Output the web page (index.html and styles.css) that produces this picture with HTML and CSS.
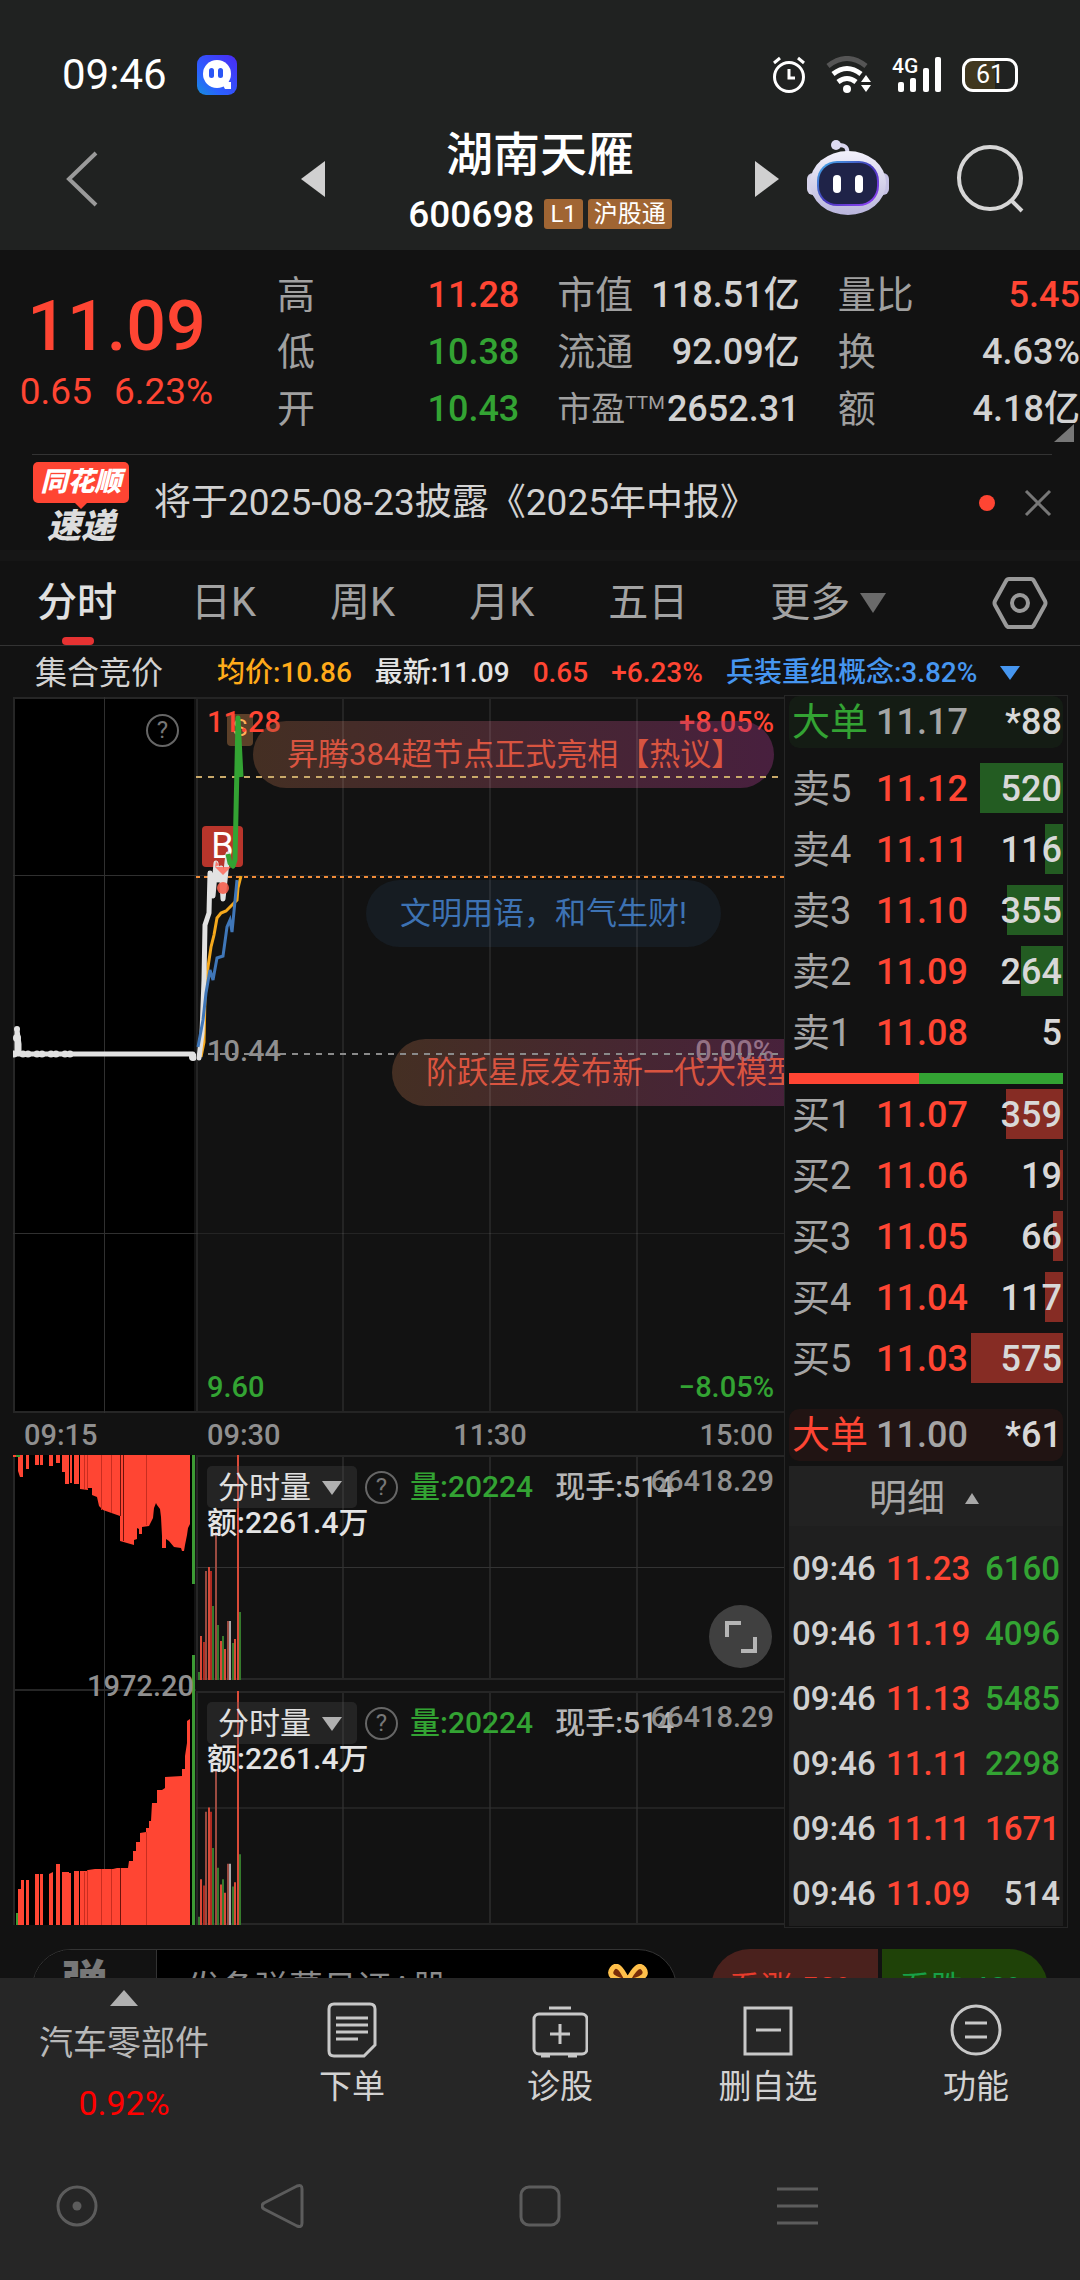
FILE: index.html
```html
<!DOCTYPE html>
<html lang="zh-CN">
    <head>
        <meta charset="utf-8">
        <meta name="viewport" content="width=device-width">
        <title>湖南天雁 600698</title>
        <link rel="stylesheet" href="styles.css">
    </head>
    <body>
        <header class="top">
            <div class="status">
                <span class="clock">09:46</span>
                <svg width="40" height="40" viewBox="0 0 40 40">
                    <defs>
                        <linearGradient id="app_bg" x1="0" y1="1" x2="1" y2="0">
                            <stop offset="0" stop-color="#1590d8" />
                            <stop offset="0.3" stop-color="#2a62ff" />
                            <stop offset="1" stop-color="#4a2af5" />
                        </linearGradient>
                    </defs>
                    <rect width="40" height="40" rx="9" fill="url(#app_bg)" />
                    <circle cx="20" cy="19" r="14" fill="#fff" />
                    <path d="M24 27h10v7h-6z" fill="#fff" />
                    <rect x="12" y="13" width="5" height="10" rx="2.5" fill="#2a55f5" />
                    <rect x="21" y="13" width="5" height="10" rx="2.5" fill="#2a55f5" />
                </svg>
                <div class="status_icons">
                    <svg width="34" height="38" viewBox="0 0 34 38" fill="none" stroke="#fff" stroke-width="3">
                        <circle cx="17" cy="21" r="14.5" />
                        <path d="M17 13v9h6M2 7l6-5M32 7l-6-5" />
                    </svg>
                    <svg width="46" height="38" viewBox="0 0 46 38" fill="none" stroke="#fff" stroke-width="5">
                        <path d="M2 10q19-15 38 0" stroke="#555" />
                        <path d="M7 18q14-11 28 0M12 26q9-7 18 0" />
                        <circle cx="21" cy="33" r="4" fill="#fff" stroke="none" />
                        <path d="M35 26l5-7 5 7zM35 29l5 7 5-7z" fill="#fff" stroke="none" />
                    </svg>
                    <div class="signal">
                        <span class="net">4G</span>
                        <svg width="50" height="38" viewBox="0 0 50 38" fill="#fff">
                            <rect x="6" y="26" width="6" height="10" rx="2" />
                            <rect x="18" y="22" width="6" height="14" rx="2" />
                            <rect x="31" y="12" width="6" height="24" rx="2" />
                            <rect x="43" y="1" width="6" height="35" rx="2" />
                        </svg>
                    </div>
                    <span class="battery">61</span>
                </div>
            </div>
            <div class="title_bar">
                <button class="plain" aria-label="返回">
                    <svg width="34" height="58" viewBox="0 0 34 58" fill="none" stroke="#9a9a9a" stroke-width="4">
                        <path d="M31 3L4 29l27 26" />
                    </svg>
                </button>
                <button class="plain prev" aria-label="上一只">
                    <svg width="24" height="36" viewBox="0 0 24 36"><path d="M24 0v36L0 18z" fill="#d0d0d0" /></svg>
                </button>
                <div class="stock">
                    <h1>湖南天雁</h1>
                    <div class="code">600698 <span class="tag">L1</span><span class="tag">沪股通</span></div>
                </div>
                <button class="plain" aria-label="下一只">
                    <svg width="24" height="36" viewBox="0 0 24 36"><path d="M0 0v36l24-18z" fill="#d0d0d0" /></svg>
                </button>
                <button class="plain robot" aria-label="助手">
                    <svg width="82" height="78" viewBox="0 0 82 78">
                        <defs>
                            <linearGradient id="head" x1="0" y1="0" x2="0" y2="1">
                                <stop offset="0" stop-color="#f2f1fb" />
                                <stop offset="1" stop-color="#b9b5dc" />
                            </linearGradient>
                            <linearGradient id="visor" x1="0" y1="0" x2="1" y2="1">
                                <stop offset="0" stop-color="#45b6ee" />
                                <stop offset="0.5" stop-color="#4338b8" />
                                <stop offset="1" stop-color="#9a44ff" />
                            </linearGradient>
                        </defs>
                        <path d="M40 14q2-9-8-9" fill="none" stroke="#d8d5ee" stroke-width="4" />
                        <circle cx="29" cy="5" r="5" fill="#dedbf2" />
                        <rect x="0" y="33" width="12" height="22" rx="6" fill="#d5d2ea" />
                        <rect x="70" y="33" width="12" height="22" rx="6" fill="#c5c1e4" />
                        <ellipse cx="41" cy="43" rx="38" ry="32" fill="url(#head)" />
                        <rect x="10" y="21" width="62" height="45" rx="20" fill="url(#visor)" />
                        <rect x="12" y="23" width="58" height="41" rx="18" fill="#1f2348" />
                        <rect x="26" y="35" width="8" height="18" rx="4" fill="#fff" />
                        <rect x="48" y="35" width="8" height="18" rx="4" fill="#fff" />
                    </svg>
                </button>
                <button class="plain search" aria-label="搜索">
                    <svg width="70" height="70" viewBox="0 0 70 70" fill="none" stroke="#d6d6d6" stroke-width="4">
                        <circle cx="34" cy="34" r="31" />
                        <path d="M55 56l11 11" />
                    </svg>
                </button>
            </div>
        </header>

        <main>
            <section class="quote">
                <div class="last">
                    <div class="price">11.09</div>
                    <div class="change"><span>0.65</span><span>6.23%</span></div>
                </div>
                <dl class="stats">
                    <div><dt>高</dt><dd class="red">11.28</dd></div>
                    <div><dt>市值</dt><dd>118.51亿</dd></div>
                    <div><dt>量比</dt><dd class="red">5.45</dd></div>
                    <div><dt>低</dt><dd class="green">10.38</dd></div>
                    <div><dt>流通</dt><dd>92.09亿</dd></div>
                    <div><dt>换</dt><dd>4.63%</dd></div>
                    <div><dt>开</dt><dd class="green">10.43</dd></div>
                    <div><dt class="pe">市盈<sup>TTM</sup></dt><dd>2652.31</dd></div>
                    <div><dt>额</dt><dd>4.18亿</dd></div>
                </dl>
                <svg class="corner" width="20" height="18" viewBox="0 0 20 18"><path d="M20 0v18H0z" fill="#777" /></svg>
            </section>

            <section class="news">
                <div class="news_logo">
                    <span class="logo_top">同花顺</span>
                    <span class="logo_bottom">速递</span>
                </div>
                <a href="#">将于2025-08-23披露《2025年中报》</a>
                <i class="dot"></i>
                <button class="plain" aria-label="关闭">
                    <svg width="28" height="28" viewBox="0 0 28 28" stroke="#777" stroke-width="3"><path d="M2 2l24 24M26 2L2 26" /></svg>
                </button>
            </section>

            <nav class="tabs">
                <button class="active">分时</button>
                <button>日K</button>
                <button>周K</button>
                <button>月K</button>
                <button>五日</button>
                <button class="more">更多<svg width="26" height="20" viewBox="0 0 26 20"><path d="M0 0h26L13 20z" fill="#6a6a6a" /></svg></button>
                <button class="settings" aria-label="设置">
                    <svg width="56" height="52" viewBox="0 0 56 52" fill="none" stroke="#999" stroke-width="4">
                        <path d="M17 2h22q2 0 3 2l11 20q1 2 0 4L42 48q-1 2-3 2H17q-2 0-3-2L3 28q-1-2 0-4L14 4q1-2 3-2z" />
                        <circle cx="28" cy="26" r="8" />
                    </svg>
                </button>
            </nav>

            <div class="info">
                <span class="auction">集合竞价</span>
                <span class="orange">均价:10.86</span>
                <span class="light">最新:11.09</span>
                <span class="red">0.65</span>
                <span class="red">+6.23%</span>
                <span class="blue">兵装重组概念:3.82%</span>
                <svg width="20" height="14" viewBox="0 0 20 14"><path d="M0 0h20L10 14z" fill="#4696f0" /></svg>
            </div>

            <section class="board">
                <div class="charts">
                    <!-- call auction price -->
                    <div class="panel auction_price">
                        <svg class="plot" viewBox="0 0 183 716" preserveAspectRatio="none">
                            <rect x="2" y="1" width="179" height="714" />
                            <g stroke="#262626" stroke-width="2">
                                <path d="M1 0v716M0 1h183M0 715h183" />
                                <path d="M0 178.500h183M91.500 0v716M0 536.500h183" stroke="#303030" stroke-width="1" />
                            </g>
                            <path d="M0 357h8M4 357v-24l2 14v10h174l1 4" fill="none" stroke="#e2e2e2" stroke-width="5" stroke-linejoin="round" />
                            <path d="M1 357h60" stroke="#e2e2e2" stroke-width="7" stroke-linecap="round" stroke-dasharray="0 9 0 5" />
                            <circle cx="4" cy="332" r="3" fill="#e2e2e2" />
                            <circle cx="4" cy="341" r="4" fill="#e2e2e2" />
                            <circle cx="180" cy="360" r="4" fill="#e2e2e2" />
                        </svg>
                        <button class="help auction_help" aria-label="说明">?</button>
                    </div>

                    <!-- intraday price -->
                    <div class="panel price_panel">
                        <span class="mark_b">B</span>
                        <span class="mark_s">S</span>
                        <span class="lbl top_left red">11.28</span>
                        <span class="lbl top_right red">+8.05%</span>
                        <span class="lbl mid_left gray">10.44</span>
                        <span class="lbl mid_right gray">0.00%</span>
                        <span class="lbl low_left green">9.60</span>
                        <span class="lbl low_right green">−8.05%</span>
                        <a class="pill pill_1" href="#">昇腾384超节点正式亮相【热议】</a>
                        <span class="pill pill_2">文明用语，和气生财!</span>
                        <a class="pill pill_3" href="#">阶跃星辰发布新一代大模型</a>
                        <svg class="plot" viewBox="0 0 588 716" preserveAspectRatio="none" fill="none">
                            <g stroke="#fff" stroke-opacity="0.08" stroke-width="2">
                                <path d="M1 0v716M147 0v716M294 0v716M441 0v716M0 1h588M0 715h588" />
                                <path d="M0 178.500h588M0 536.500h588" stroke-width="1" />
                            </g>
                            <path d="M0 80h582" stroke="#c9a96a" stroke-width="2" stroke-dasharray="6 6" />
                            <path d="M0 180h588" stroke="#f08c3a" stroke-width="2" stroke-dasharray="4 4" />
                            <path d="M12 357h570" stroke="#8a8a8a" stroke-width="2" stroke-dasharray="6 6" />
                            <path d="M5 360l3-15 1-45 3-30 3-20 3-12 3-17 4-5 5-2 5-5 6-6 1-12 3-12" stroke="#f5a81c" stroke-width="3" />
                            <path d="M3 361l3-25 2-53 1-55 4-12 1-40 3 23 3-33 2 17 3-12 2 31 4-37 1-8" stroke="#e2e2e2" stroke-width="5" stroke-linejoin="round" stroke-linecap="round" />
                            <path d="M2 350l5-27 3-27 4-23 3 10 4-22 6-2 4-29 3-7 2 12 5-52" stroke="#3f76b8" stroke-width="3" />
                            <path d="M19 170l8 8 8-8zM19 170l1-6 3 4z" fill="#ff6a5a" fill-opacity="0.85" />
                            <circle cx="27" cy="191" r="6" fill="#f5604f" fill-opacity="0.9" />
                            <path d="M32 157l2 9 3 3 2-6 3-142 3 59" stroke="#33a333" stroke-width="5" stroke-linejoin="round" />
                        </svg>
                    </div>

                    <div class="axis"><span>09:15</span></div>
                    <div class="axis day"><span>09:30</span><span>11:30</span><span>15:00</span></div>

                    <!-- call auction volume -->
                    <div class="panel auction_vol">
                        <svg class="plot" viewBox="0 0 183 470" preserveAspectRatio="none">
                            <rect x="2" width="179" height="470" />
                            <path d="M1 0v470M0 235h183" stroke="#262626" stroke-width="2" />
                            <path d="M91.500 0v470" stroke="#303030" />
                            <g fill="#ff4533">
                                <path d="M0 0h5v2H0zM5 0h5v22H7l-2-6zM13 0h3v14h-3zM22 0h4v10h-4zM27 0h3v10h-3zM36 0h4v11h-4zM43 0h4v8h-4zM49 0h7v29h-4V17h-3zM57 0h2v28h-2zM61 0h5v29h-5z" />
                                <path d="M67 0v34l8 1v-2h4v7l5 2 2 9 4 4 17 6v25l14 4v-5l3-1v-11l2 1v5h3v-7l7-1 2-4 2-4 1-10 2-5 1 2 3 4 1 8 1 19v12h4v-9l3 2 5 6 7 1 1 3h2l1-6 2-10 1-7 2-4V0z" />
                                <path d="M5 434h3v-9h3v45H5zM13 425h3v45h-3zM22 419h4v51h-4zM27 419h3v51h-3zM36 419l4-2v53h-4zM43 409h4v61h-4zM49 417h7v53h-7zM56 418h2v52h-2zM61 416h5v54h-5z" />
                                <path d="M67 470v-54h7l1-1 7-1h18l4-1h11l1-7h4v-10h3v-9h4v-9l6-1v-4h3v-7h2l1-18h5v-13h5l3-2v-11l17-1v-7h3v-13l2-13v-22l3-2v207z" />
                            </g>
                            <path d="M71.500 0v34M74.500 0v34M88.500 0v55M98.500 0v58M133.500 0v70M71.500 417v53M74.500 415v55M88.500 414v56M98.500 414v56M133.500 377v93" stroke="#c92d20" />
                            <path d="M107.500 0v61M110.500 0v86M107.500 413v57" stroke="#6d120b" />
                            <path d="M3 0h4v2H3zM3 458h2v12H3zM179 0h3v129h-3zM179 200h3v270h-3z" fill="#3c9a34" />
                        </svg>
                        <span class="lbl vol_max gray">1972.20</span>
                    </div>

                    <!-- intraday volume -->
                    <div class="vols">
                        <div class="panel vol">
                            <svg class="plot" viewBox="0 0 588 225" preserveAspectRatio="none">
                                <g id="vol_bars" fill="none" stroke-width="2">
                                    <path d="M1 0v225M147 0v225M294 0v225M441 0v225M0 1h588M0 224h588" stroke="#262626" />
                                    <path d="M0 112.500h588" stroke="#333" stroke-width="1" />
                                    <path d="M5 225v-44M13 225V112M25 225v-39M29 225v-31M39 225v-41M42 225V0" stroke="#d94a38" />
                                    <path d="M8 225v-38M15 225V116" stroke="#b02a20" />
                                    <path d="M10 225V116M20 225V77M32 225v-59" stroke="#9a4a40" />
                                    <path d="M3 225v-8M17 225v-74M22 225v-55M27 225v-44M37 225v-37M44 225v-68" stroke="#357a2c" />
                                    <path d="M34 225v-59" stroke="#aaa" />
                                </g>
                            </svg>
                            <div class="vol_head">
                                <select aria-label="指标"><option>分时量</option></select>
                                <button class="help" aria-label="说明">?</button>
                                <span class="green">量:20224</span>
                                <span class="hand">现手:514</span>
                            </div>
                            <div class="amount">额:2261.4万</div>
                            <span class="lbl vol_top gray">66418.29</span>
                            <button class="expand" aria-label="全屏">
                                <svg width="34" height="34" viewBox="0 0 34 34" fill="none" stroke="#b5b5b5" stroke-width="4"><path d="M3 17V3h14M17 31h14V17" /></svg>
                            </button>
                        </div>
                        <div class="panel vol vol_2">
                            <svg class="plot" viewBox="0 0 588 225" preserveAspectRatio="none"><use href="#vol_bars" /></svg>
                            <div class="vol_head">
                                <select aria-label="指标"><option>分时量</option></select>
                                <button class="help" aria-label="说明">?</button>
                                <span class="green">量:20224</span>
                                <span class="hand">现手:514</span>
                            </div>
                            <div class="amount">额:2261.4万</div>
                            <span class="lbl vol_top gray">66418.29</span>
                        </div>
                    </div>
                </div>

                <aside class="book">
                    <div class="big sell"><span>大单</span><span>11.17</span><span>*88</span></div>
                    <table class="orders asks">
                        <tr><th>卖5</th><td>11.12</td><td><i style="width: 83px"></i><b>520</b></td></tr>
                        <tr><th>卖4</th><td>11.11</td><td><i style="width: 18px"></i><b>116</b></td></tr>
                        <tr><th>卖3</th><td>11.10</td><td><i style="width: 56px"></i><b>355</b></td></tr>
                        <tr><th>卖2</th><td>11.09</td><td><i style="width: 42px"></i><b>264</b></td></tr>
                        <tr><th>卖1</th><td>11.08</td><td><i style="width: 0px"></i><b>5</b></td></tr>
                    </table>
                    <div class="ratio"><i style="width: 47.500%"></i></div>
                    <table class="orders bids">
                        <tr><th>买1</th><td>11.07</td><td><i style="width: 57px"></i><b>359</b></td></tr>
                        <tr><th>买2</th><td>11.06</td><td><i style="width: 3px"></i><b>19</b></td></tr>
                        <tr><th>买3</th><td>11.05</td><td><i style="width: 10px"></i><b>66</b></td></tr>
                        <tr><th>买4</th><td>11.04</td><td><i style="width: 18px"></i><b>117</b></td></tr>
                        <tr><th>买5</th><td>11.03</td><td><i style="width: 92px"></i><b>575</b></td></tr>
                    </table>
                    <div class="big buy"><span>大单</span><span>11.00</span><span>*61</span></div>
                    <button class="detail_head">明细<svg width="14" height="11" viewBox="0 0 14 11"><path d="M0 11h14L7 0z" fill="#a8a8a8" /></svg></button>
                    <div class="detail">
                        <table>
                            <tr><td>09:46</td><td class="red">11.23</td><td class="green">6160</td></tr>
                            <tr><td>09:46</td><td class="red">11.19</td><td class="green">4096</td></tr>
                            <tr><td>09:46</td><td class="red">11.13</td><td class="green">5485</td></tr>
                            <tr><td>09:46</td><td class="red">11.11</td><td class="green">2298</td></tr>
                            <tr><td>09:46</td><td class="red">11.11</td><td class="red">1671</td></tr>
                            <tr><td>09:46</td><td class="red">11.09</td><td>514</td></tr>
                        </table>
                    </div>
                </aside>
            </section>

            <section class="social">
                <div class="danmu">
                    <button class="danmu_toggle">弹</button>
                    <input type="text" aria-label="弹幕" placeholder="发条弹幕见证A股">
                    <svg width="40" height="48" viewBox="0 0 40 48">
                        <path d="M19 16Q10-4 4 5t15 13Q30-4 36 5T19 18" fill="#7a2d08" stroke="#ffc04a" stroke-width="5" />
                        <rect x="3" y="17" width="34" height="28" rx="3" fill="#f08a24" />
                        <rect x="17" y="17" width="6" height="28" fill="#ffe9a8" />
                    </svg>
                </div>
                <div class="vote">
                    <button class="up">看涨 52%</button>
                    <button class="down">看跌 48%</button>
                </div>
            </section>
        </main>

        <footer class="bottom">
            <nav class="toolbar">
                <a class="sector" href="#">
                    <svg width="28" height="16" viewBox="0 0 28 16"><path d="M0 16h28L14 0z" fill="#b0b0b0" /></svg>
                    <span>汽车零部件</span>
                    <span class="sector_change">0.92%</span>
                </a>
                <a href="#">
                    <svg width="56" height="56" viewBox="0 0 56 56" fill="none" stroke="#c8c8c8" stroke-width="3">
                        <path d="M10 2h36q5 0 5 5v36L40 54H10q-5 0-5-5V7q0-5 5-5z" />
                        <path d="M12 16h32M12 23h32M12 30h32M12 37h22" />
                    </svg>
                    <span>下单</span>
                </a>
                <a href="#">
                    <svg width="56" height="56" viewBox="0 0 56 56" fill="none" stroke="#c8c8c8" stroke-width="3">
                        <rect x="2" y="12" width="53" height="40" rx="5" />
                        <path d="M17 6h22M28 22v20M18 32h20" />
                        <path d="M9 54h9M36 54h9" />
                    </svg>
                    <span>诊股</span>
                </a>
                <a href="#">
                    <svg width="56" height="56" viewBox="0 0 56 56" fill="none" stroke="#c8c8c8" stroke-width="3">
                        <rect x="5" y="6" width="46" height="46" />
                        <path d="M16 28h25" />
                    </svg>
                    <span>删自选</span>
                </a>
                <a href="#">
                    <svg width="56" height="56" viewBox="0 0 56 56" fill="none" stroke="#c8c8c8" stroke-width="3">
                        <circle cx="28" cy="28" r="24" />
                        <path d="M17 21h22M17 35h22" />
                    </svg>
                    <span>功能</span>
                </a>
            </nav>
            <div class="system">
                <button class="plain" aria-label="定位">
                    <svg width="44" height="46" viewBox="0 0 44 46" fill="none" stroke="#5c5c5c" stroke-width="3"><circle cx="22" cy="23" r="19" /><circle cx="22" cy="23" r="4.500" fill="#5c5c5c" stroke="none" /></svg>
                </button>
                <button class="plain" aria-label="返回">
                    <svg width="44" height="46" viewBox="0 0 44 46" fill="none" stroke="#5c5c5c" stroke-width="3"><path d="M3 20L36 3q5-2 5 3v34q0 5-5 3L3 26q-4-3 0-6z" /></svg>
                </button>
                <button class="plain" aria-label="主页">
                    <svg width="44" height="46" viewBox="0 0 44 46" fill="none" stroke="#5c5c5c" stroke-width="3"><rect x="3" y="4" width="38" height="38" rx="8" /></svg>
                </button>
                <button class="plain" aria-label="菜单">
                    <svg width="44" height="46" viewBox="0 0 44 46" stroke="#5c5c5c" stroke-width="3"><path d="M2 6h41M2 23h41M2 40h41" /></svg>
                </button>
            </div>
        </footer>
    </body>
</html>
```

FILE: styles.css
```css
* {
    box-sizing: border-box;
}

body {
    margin: 0;
    background-color: #121212;
    color: #d2d2d2;
    font-family: Roboto, "Noto Sans CJK SC", sans-serif;
    font-size: 30px;
    line-height: 1;
}

button, select, input {
    margin: 0;
    padding: 0;
    border: 0;
    background: none;
    color: inherit;
    font: inherit;
}

a {
    color: inherit;
    text-decoration: none;
}

svg {
    display: block;
    flex: none;
}

.red {
    color: #ff4533;
}

.green {
    color: #33a333;
}

.orange {
    color: #ffab1a;
}

.blue {
    color: #4696f0;
}

.gray {
    color: #8f8f8f;
}

.light {
    color: #e4e4e4;
}

/* header */

.top {
    height: 250px;
    background-color: #202221;
}

.status {
    display: flex;
    align-items: center;
    gap: 30px;
    height: 110px;
    padding: 40px 62px 0;
    color: #fff;
}

.clock {
    font-size: 42px;
}

.status_icons {
    display: flex;
    align-items: center;
    gap: 20px;
    margin-left: auto;
}

.signal {
    position: relative;
}

.net {
    position: absolute;
    left: 0;
    top: 0;
    font-size: 21px;
    font-weight: 500;
}

.battery {
    width: 56px;
    height: 34px;
    border: 3px solid #fff;
    border-radius: 11px;
    background: linear-gradient(90deg, #40371f 60%, #202221 60%);
    font-size: 25px;
    line-height: 28px;
    text-align: center;
}

.title_bar {
    display: flex;
    align-items: center;
    height: 140px;
    padding: 0 54px 2px 65px;
}

.prev {
    margin-left: 202px;
}

.stock {
    display: flex;
    flex: 1;
    flex-direction: column;
    align-items: center;
    gap: 14px;
    padding-top: 2px;
    color: #fff;
}

.stock h1 {
    margin: 0;
    font-size: 47px;
    font-weight: 500;
    line-height: 54px;
}

.code {
    display: flex;
    align-items: center;
    gap: 5px;
    font-size: 37px;
    font-weight: 500;
}

.tag {
    padding: 0 6px;
    border-radius: 3px;
    background-color: #a06533;
    font-size: 24px;
    font-weight: 400;
    line-height: 30px;
}

.code .tag:first-of-type {
    margin-left: 5px;
}

.robot {
    margin-left: 28px;
}

.search {
    margin-left: 67px;
}

/* quote */

.quote {
    position: relative;
    display: flex;
    height: 204px;
    padding-top: 16px;
}

.last {
    display: flex;
    flex-direction: column;
    align-items: center;
    gap: 10px;
    width: 233px;
    margin-right: 44px;
    padding-top: 23px;
    color: #ff4533;
}

.price {
    font-size: 70px;
    font-weight: 500;
    line-height: 74px;
}

.change {
    display: flex;
    gap: 22px;
    font-size: 37px;
}

.stats {
    display: grid;
    flex: 1;
    grid-template-columns: repeat(3, 1fr);
    grid-auto-rows: 57px;
    column-gap: 38px;
    margin: 0;
}

.stats div {
    display: flex;
    align-items: center;
    justify-content: space-between;
    white-space: nowrap;
}

.stats dt {
    color: #a0a0a0;
    font-size: 38px;
}

.stats .pe {
    font-size: 34px;
}

.stats sup {
    font-size: 19px;
    line-height: 0;
}

.stats dd {
    margin: 0;
    font-size: 36px;
    font-weight: 500;
}

.corner {
    position: absolute;
    right: 6px;
    bottom: 12px;
}

/* news */

.news {
    display: flex;
    align-items: center;
    height: 96px;
    margin: 0 28px 0 32px;
    border-top: 1px solid #333;
    font-size: 37px;
}

.news_logo {
    display: flex;
    flex-direction: column;
    align-items: center;
    gap: 6px;
    width: 98px;
    margin-right: 24px;
    color: #fff;
    font-style: italic;
    font-weight: 900;
}

.logo_top {
    position: relative;
    width: 96px;
    border-radius: 5px;
    background-color: #ff4533;
    font-size: 27px;
    line-height: 41px;
    text-align: center;
}

.logo_top::after {
    content: "";
    position: absolute;
    left: 42px;
    top: 41px;
    border: 6px solid transparent;
    border-top-color: #ff4533;
}

.logo_bottom {
    color: #ddd;
    font-size: 34px;
}

.dot {
    width: 16px;
    height: 16px;
    margin: 0 29px 0 auto;
    border-radius: 50%;
    background-color: #ff4533;
}

/* period tabs */

.tabs {
    display: flex;
    gap: 74px;
    height: 96px;
    padding: 0 32px 0 37px;
    border-top: 11px solid #161616;
    border-bottom: 1px solid #333;
    color: #a2a2a2;
    font-size: 40px;
}

.tabs button {
    position: relative;
    display: flex;
    align-items: center;
    gap: 10px;
}

.tabs .active {
    color: #e0e0e0;
    font-weight: 500;
}

.tabs .active::after {
    content: "";
    position: absolute;
    left: 25px;
    bottom: 0;
    width: 32px;
    height: 8px;
    border-radius: 4px;
    background-color: #e63232;
}

.tabs .more {
    margin-left: 8px;
}

.tabs .settings {
    margin-left: auto;
}

.info {
    display: flex;
    align-items: center;
    gap: 23px;
    height: 49px;
    padding: 4px 32px 0 35px;
    font-size: 28px;
    font-weight: 500;
    white-space: nowrap;
}

.auction {
    width: 159px;
    font-size: 32px;
    font-weight: 400;
}

/* charts */

.board {
    display: flex;
    margin: 0 12px 0 13px;
}

.charts {
    display: grid;
    flex: 1;
    grid-template-columns: 183px 1fr;
    grid-template-rows: 716px 42px 470px;
    min-width: 0;
    padding-top: 2px;
}

.panel {
    position: relative;
    overflow: hidden;
}

.plot {
    position: absolute;
    left: 0;
    top: 0;
    width: 100%;
    height: 100%;
    pointer-events: none;
}

.lbl {
    position: absolute;
    font-size: 29px;
    font-weight: 500;
}

.top_left, .mid_left, .low_left {
    left: 11px;
}

.top_right, .mid_right, .low_right, .vol_top {
    right: 10px;
}

.top_left, .top_right {
    top: 11px;
}

.mid_left, .mid_right {
    top: 340px;
}

.low_left, .low_right {
    top: 676px;
}

.help {
    width: 33px;
    height: 33px;
    border: 2px solid #666;
    border-radius: 50%;
    color: #777;
    font-size: 24px;
    line-height: 29px;
    text-align: center;
}

.auction_help {
    position: absolute;
    left: 133px;
    top: 17px;
}

.mark_b, .mark_s {
    position: absolute;
    border-radius: 4px;
    text-align: center;
}

.mark_b {
    left: 6px;
    top: 129px;
    width: 41px;
    height: 41px;
    background-color: #b8352b;
    color: #fff;
    font-size: 36px;
    line-height: 41px;
}

.mark_s {
    left: 31px;
    top: 17px;
    width: 26px;
    height: 32px;
    background-color: #5c4029;
    color: #ffb05a;
    font-size: 24px;
    line-height: 28px;
}

.pill {
    position: absolute;
    height: 67px;
    padding: 0 34px;
    border-radius: 34px;
    background: linear-gradient(90deg, rgba(150, 94, 62, 0.38), rgba(160, 54, 134, 0.38));
    color: #d95440;
    font-size: 31px;
    line-height: 67px;
    white-space: nowrap;
}

.pill_1 {
    left: 57px;
    right: 10px;
    top: 24px;
}

.pill_2 {
    left: 170px;
    top: 183px;
    background: #161c22;
    color: #3d72b3;
}

.pill_3 {
    left: 196px;
    top: 342px;
}

.axis {
    display: flex;
    align-items: center;
    padding: 2px 11px 0;
    color: #8f8f8f;
    font-size: 29px;
    font-weight: 500;
}

.day {
    justify-content: space-between;
}

.vol_max {
    right: 2px;
    top: 217px;
}

.vols {
    display: flex;
    flex-direction: column;
    gap: 11px;
}

.vol {
    height: 225px;
    padding: 11px;
}

.vol_2 {
    height: 234px;
}

.vol_head {
    position: relative;
    display: flex;
    align-items: center;
    height: 42px;
    font-weight: 500;
    white-space: nowrap;
}

.vol_head select {
    width: 150px;
    height: 42px;
    padding-left: 11px;
    border-radius: 5px;
    background-color: rgba(80, 80, 80, 0.3);
    color: #e0e0e0;
    font-size: 31px;
    font-weight: 400;
    appearance: none;
}

.vol_head::before {
    content: "";
    position: absolute;
    left: 115px;
    top: 15px;
    border: 10px solid transparent;
    border-top: 14px solid #b0b0b0;
    border-bottom: 0;
}

.vol_head .help {
    margin: 0 12px 0 8px;
    font-weight: 400;
}

.hand {
    margin-left: 22px;
    color: #b5b5b5;
}

.amount {
    position: relative;
    color: #e4e4e4;
    font-weight: 500;
}

.vol_top {
    top: 12px;
}

.expand {
    position: absolute;
    right: 12px;
    bottom: 12px;
    display: flex;
    align-items: center;
    justify-content: center;
    width: 63px;
    height: 63px;
    border-radius: 50%;
    background-color: #404040;
}

/* order book */

.book {
    flex: none;
    width: 284px;
    padding: 0 4px 1px;
    border: 1px solid #262626;
}

.big {
    display: grid;
    grid-template-columns: 84px 90px 1fr;
    align-items: center;
    height: 52px;
    padding: 0 1px 0 3px;
    border-radius: 10px;
    color: #a5a5a5;
    font-size: 36px;
    font-weight: 500;
}

.big span:first-child {
    font-size: 38px;
    font-weight: 400;
}

.big span:last-child {
    color: #d8d8d8;
    text-align: right;
}

.sell {
    margin-bottom: 10px;
    background-color: #141c14;
}

.sell span:first-child {
    color: #33a333;
}

.buy {
    margin: 20px 0 5px;
    background-color: #211413;
}

.buy span:first-child {
    color: #ff4533;
}

.book table {
    width: 100%;
    border-collapse: collapse;
    table-layout: fixed;
}

.book th, .book td {
    padding: 0;
    text-align: left;
}

.orders tr {
    height: 61px;
}

.orders th {
    width: 87px;
    padding-left: 3px;
    color: #a5a5a5;
    font-size: 38px;
    font-weight: 400;
}

.orders td {
    color: #ff4533;
    font-size: 36px;
    font-weight: 500;
}

.orders td:last-child {
    position: relative;
    padding-right: 1px;
    color: #d8d8d8;
    text-align: right;
}

.orders i {
    position: absolute;
    right: 0;
    top: 5px;
    height: 50px;
}

.orders b {
    position: relative;
    font-weight: 500;
}

.asks i {
    background-color: #235c22;
}

.bids i {
    background-color: #862c24;
}

.ratio {
    height: 11px;
    margin-top: 10px;
    background-color: #33a333;
}

.ratio i {
    display: block;
    height: 100%;
    background-color: #ff4533;
}

.detail_head {
    display: flex;
    align-items: center;
    justify-content: center;
    gap: 20px;
    width: 100%;
    height: 60px;
    padding: 4px 4px 0 0;
    background-color: #222;
    color: #a8a8a8;
    font-size: 38px;
}

.detail {
    padding: 10px 3px 0 3px;
    background-color: #1f1f1f;
    font-size: 33px;
    font-weight: 500;
}

.detail tr {
    height: 65px;
}

.detail td:first-child {
    width: 94px;
}

.detail td:last-child {
    text-align: right;
}

/* comments and vote */

.social {
    display: flex;
    gap: 34px;
    height: 78px;
    margin: 21px 32px 0;
}

.danmu {
    display: flex;
    flex: 1;
    align-items: center;
    gap: 16px;
    padding-right: 28px;
    border: 1px solid #333;
    border-radius: 39px;
    background-color: #000;
    overflow: hidden;
}

.danmu_toggle {
    width: 124px;
    height: 78px;
    padding: 0 20px 12px 0;
    border-right: 1px solid #333;
    background-color: #121212;
    color: #777;
    font-size: 46px;
    font-weight: 900;
}

.danmu input {
    flex: 1;
    min-width: 0;
    padding-left: 14px;
    font-size: 34px;
}

.danmu input::placeholder {
    color: #8a8a8a;
}

.vote {
    display: flex;
    gap: 4px;
    width: 337px;
    border-radius: 39px;
    overflow: hidden;
}

.vote button {
    flex: 1;
    font-size: 32px;
}

.up {
    background-color: #4a211d;
    color: #e83c2c;
}

.down {
    background-color: #1f4208;
    color: #18a048;
}

/* bottom bars */

.bottom {
    position: fixed;
    left: 0;
    right: 0;
    bottom: 0;
    height: 302px;
    background-color: #262626;
}

.toolbar {
    display: flex;
    height: 152px;
    font-size: 33px;
}

.toolbar a {
    display: flex;
    flex: 1;
    flex-direction: column;
    align-items: center;
    gap: 12px;
    padding-top: 24px;
}

.toolbar .sector {
    flex: none;
    gap: 20px;
    width: 248px;
    padding-top: 12px;
    color: #b8b8b8;
    font-size: 34px;
}

.sector_change {
    padding-top: 6px;
    color: #f00;
}

.system {
    display: grid;
    grid-template-columns: 154px 1fr 1fr 1fr 154px;
    height: 150px;
    padding-top: 2px;
    justify-items: center;
    align-items: center;
}
```
